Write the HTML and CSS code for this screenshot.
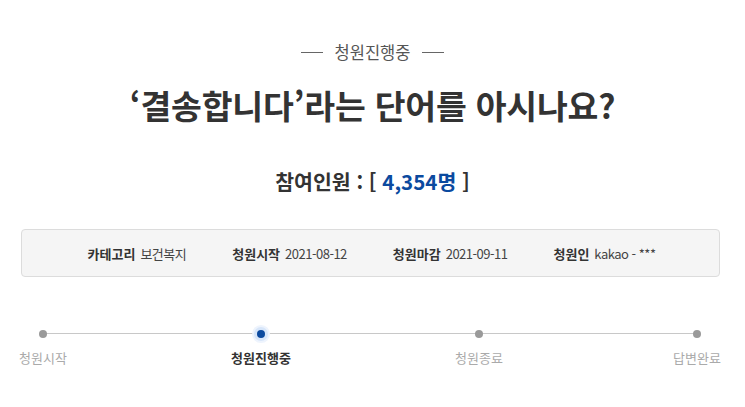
FILE: index.html
```html
<!DOCTYPE html>
<html lang="ko">
<head>
<meta charset="utf-8">
<link rel="stylesheet" href="styles.css">
</head>
<body>
<div class="page">
  <div class="status"><span class="dash"></span><span class="status-text">청원진행중</span><span class="dash"></span></div>
  <h1 class="title">‘결송합니다’라는 단어를 아시나요?</h1>
  <div class="count">참여인원 : [ <span class="num">4,354명</span> ]</div>
  <div class="info">
    <div class="item"><span class="label">카테고리</span><span class="value">보건복지</span></div>
    <div class="item"><span class="label">청원시작</span><span class="value">2021-08-12</span></div>
    <div class="item"><span class="label">청원마감</span><span class="value">2021-09-11</span></div>
    <div class="item"><span class="label">청원인</span><span class="value">kakao - ***</span></div>
  </div>
  <div class="steps">
    <div class="step"><span class="dot"></span><span class="step-label">청원시작</span></div>
    <div class="step active"><span class="dot"></span><span class="step-label">청원진행중</span></div>
    <div class="step"><span class="dot"></span><span class="step-label">청원종료</span></div>
    <div class="step"><span class="dot"></span><span class="step-label">답변완료</span></div>
  </div>
</div>
</body>
</html>
```
FILE: styles.css
```css
* { box-sizing: border-box; }
html, body { margin: 0; padding: 0; background: #fff; }
body {
  font-family: "Noto Sans CJK KR", "Noto Sans", sans-serif;
  color: #333;
  width: 745px;
  height: 407px;
  overflow: hidden;
}
.page { padding-top: 40px; }
.status {
  display: flex;
  justify-content: center;
  align-items: center;
  gap: 12px;
  height: 24px;
}
.dash { width: 22px; height: 1px; background: #666; }
.status-text { font-size: 16.5px; color: #555; }
.title {
  margin: 21px 0 0;
  text-align: center;
  font-size: 33.5px;
  font-weight: 700;
  line-height: 40px;
  color: #333;
  letter-spacing: -0.2px;
}
.count {
  margin-top: 42px;
  text-align: center;
  font-size: 20.5px;
  font-weight: 700;
  line-height: 28px;
  color: #333;
}
.count .num { color: #0b4a9f; }
.info {
  margin: 34px 25px 0 21px;
  height: 48px;
  border: 1px solid #dcdcdc;
  border-radius: 4px;
  background: #f5f5f5;
  display: flex;
  justify-content: center;
  align-items: center;
  gap: 46px;
  padding-left: 2px;
  font-size: 13px;
}
.item { display: flex; gap: 5px; align-items: center; }
.label { font-weight: 700; color: #333; }
.value { color: #444; letter-spacing: -0.5px; }
.steps {
  position: relative;
  margin: 49px 18px 0 13px;
  display: flex;
  justify-content: space-between;
}
.steps::before {
  content: "";
  position: absolute;
  left: 30px;
  right: 30px;
  top: 7px;
  height: 1px;
  background: #c8c8c8;
}
.step {
  position: relative;
  width: 60px;
  display: flex;
  flex-direction: column;
  align-items: center;
}
.dot {
  width: 8px;
  height: 8px;
  margin-top: 4px;
  border-radius: 50%;
  background: #9a9a9a;
}
.step.active .dot {
  background: #0b4a9f;
  box-shadow: 0 0 0 3px #d7e6fa, 0 0 0 5px #eef4fd;
}
.step-label {
  margin-top: 10px;
  font-size: 13px;
  color: #aaa;
  white-space: nowrap;
}
.step.active .step-label { color: #333; font-weight: 700; }
```
